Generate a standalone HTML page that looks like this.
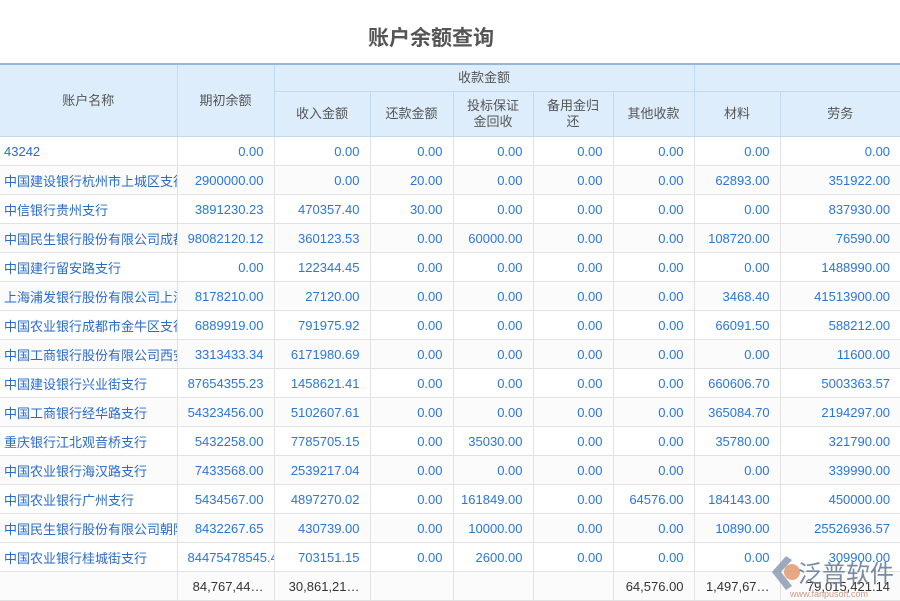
<!DOCTYPE html>
<html><head><meta charset="utf-8"><style>
body{margin:0;width:900px;height:600px;overflow:hidden;background:#fff;font-family:"Liberation Sans","Noto Sans CJK SC",sans-serif;position:relative}
.title{position:absolute;top:22px;left:0;width:862px;text-align:center;font-size:21px;font-weight:bold;color:#555}
table{position:absolute;top:63px;left:0;border-collapse:collapse;table-layout:fixed;width:900px;font-size:13px}
th{background:#deedfb;color:#555;font-weight:normal;border:1px solid #c3d9ee;line-height:16px;padding:0}
thead tr:first-child th{border-top:2px solid #8fb8de}
td{height:28px;border:1px solid #e2e2e2;color:#2a76d8;text-align:right;padding:0 10px 0 0;white-space:nowrap;overflow:hidden}
td:first-child{text-align:left;padding:0 0 0 4px;color:#2a6bc6}
tbody tr:nth-child(even) td{background:#fbfbfb}
tr.tot td{color:#333;background:#fff}
th:first-child,td:first-child{border-left:none}
th:last-child,td:last-child{border-right:none}
td.l{text-align:left;padding:0 0 0 10px}
.logo{position:absolute;left:768px;top:550px;width:132px;height:50px}
</style></head><body>
<div class="title">账户余额查询</div>
<table>
<colgroup><col style="width:177px"><col style="width:97px"><col style="width:96px"><col style="width:83px"><col style="width:80px"><col style="width:80px"><col style="width:81px"><col style="width:86px"><col style="width:120px"></colgroup>
<thead>
<tr><th rowspan="2" style="height:71px">账户名称</th><th rowspan="2">期初余额</th><th colspan="5" style="height:25px">收款金额</th><th colspan="2"></th></tr>
<tr style="height:44px"><th>收入金额</th><th>还款金额</th><th>投标保证<br>金回收</th><th>备用金归<br>还</th><th>其他收款</th><th>材料</th><th>劳务</th></tr>
</thead>
<tbody>
<tr><td>43242</td><td>0.00</td><td>0.00</td><td>0.00</td><td>0.00</td><td>0.00</td><td>0.00</td><td>0.00</td><td>0.00</td></tr>
<tr><td>中国建设银行杭州市上城区支行</td><td>2900000.00</td><td>0.00</td><td>20.00</td><td>0.00</td><td>0.00</td><td>0.00</td><td>62893.00</td><td>351922.00</td></tr>
<tr><td>中信银行贵州支行</td><td>3891230.23</td><td>470357.40</td><td>30.00</td><td>0.00</td><td>0.00</td><td>0.00</td><td>0.00</td><td>837930.00</td></tr>
<tr><td>中国民生银行股份有限公司成都</td><td>98082120.12</td><td>360123.53</td><td>0.00</td><td>60000.00</td><td>0.00</td><td>0.00</td><td>108720.00</td><td>76590.00</td></tr>
<tr><td>中国建行留安路支行</td><td>0.00</td><td>122344.45</td><td>0.00</td><td>0.00</td><td>0.00</td><td>0.00</td><td>0.00</td><td>1488990.00</td></tr>
<tr><td>上海浦发银行股份有限公司上海</td><td>8178210.00</td><td>27120.00</td><td>0.00</td><td>0.00</td><td>0.00</td><td>0.00</td><td>3468.40</td><td>41513900.00</td></tr>
<tr><td>中国农业银行成都市金牛区支行</td><td>6889919.00</td><td>791975.92</td><td>0.00</td><td>0.00</td><td>0.00</td><td>0.00</td><td>66091.50</td><td>588212.00</td></tr>
<tr><td>中国工商银行股份有限公司西安</td><td>3313433.34</td><td>6171980.69</td><td>0.00</td><td>0.00</td><td>0.00</td><td>0.00</td><td>0.00</td><td>11600.00</td></tr>
<tr><td>中国建设银行兴业街支行</td><td>87654355.23</td><td>1458621.41</td><td>0.00</td><td>0.00</td><td>0.00</td><td>0.00</td><td>660606.70</td><td>5003363.57</td></tr>
<tr><td>中国工商银行经华路支行</td><td>54323456.00</td><td>5102607.61</td><td>0.00</td><td>0.00</td><td>0.00</td><td>0.00</td><td>365084.70</td><td>2194297.00</td></tr>
<tr><td>重庆银行江北观音桥支行</td><td>5432258.00</td><td>7785705.15</td><td>0.00</td><td>35030.00</td><td>0.00</td><td>0.00</td><td>35780.00</td><td>321790.00</td></tr>
<tr><td>中国农业银行海汉路支行</td><td>7433568.00</td><td>2539217.04</td><td>0.00</td><td>0.00</td><td>0.00</td><td>0.00</td><td>0.00</td><td>339990.00</td></tr>
<tr><td>中国农业银行广州支行</td><td>5434567.00</td><td>4897270.02</td><td>0.00</td><td>161849.00</td><td>0.00</td><td>64576.00</td><td>184143.00</td><td>450000.00</td></tr>
<tr><td>中国民生银行股份有限公司朝阳</td><td>8432267.65</td><td>430739.00</td><td>0.00</td><td>10000.00</td><td>0.00</td><td>0.00</td><td>10890.00</td><td>25526936.57</td></tr>
<tr><td>中国农业银行桂城街支行</td><td class="l">84475478545.4</td><td>703151.15</td><td>0.00</td><td>2600.00</td><td>0.00</td><td>0.00</td><td>0.00</td><td>309900.00</td></tr>
<tr class="tot"><td></td><td>84,767,44…</td><td>30,861,21…</td><td></td><td></td><td></td><td>64,576.00</td><td>1,497,67…</td><td>79,015,421.14</td></tr>
</tbody></table>
<svg class="logo" viewBox="0 0 132 50"><path d="M4 22 L18 6 L24 10 L13 22 L24 36 L18 40 Z" fill="#8a9bb0" opacity=".85"/><circle cx="24" cy="22" r="8" fill="#e39a70" opacity=".85"/><text x="30" y="32" font-size="24" fill="#6a7f99" font-family="Noto Sans CJK SC,sans-serif" opacity=".9">泛普软件</text><text x="22" y="47" font-size="9" fill="#c98" font-family="Liberation Sans,sans-serif">www.fanpusoft.com</text></svg>
</body></html>
